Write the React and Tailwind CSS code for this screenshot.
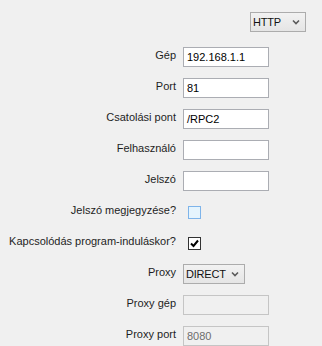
import React from "react"

const font = { fontFamily: "'Liberation Sans', Arial, sans-serif" }

const Chevron = () => (
	<svg width="8" height="6" viewBox="0 0 8 6" className="text-[#5a5a5a] shrink-0">
		<path d="M1 1.5 L4 4.5 L7 1.5" fill="none" stroke="currentColor" strokeWidth="1.6" />
	</svg>
)

const Select = ({ value, className }) => (
	<div className={"flex items-center justify-between h-5 pl-[2px] pr-[5px] border border-[#acacac] bg-gradient-to-b from-[#f2f2f2] to-[#e5e5e5] text-[11px] text-[#111] " + className}>
		<span className="tracking-[-0.2px]">{value}</span>
		<Chevron />
	</div>
)

const TextBox = ({ value, disabled }) => (
	<div className={"flex items-center h-5 w-[86px] px-[3px] border text-[11px] " + (disabled ? "border-[#c5c5c5] bg-[#f0f0f0] text-[#6d6d6d]" : "border-[#abadb3] bg-white text-black")}>
		{value}
	</div>
)

const Check = ({ checked }) => (
	<div className={"mx-[5px] w-[13px] h-[13px] border flex items-center justify-center " + (checked ? "border-[#333] bg-white" : "border-[#7eb4ea] bg-[#e5f4fd]")}>
		{checked && (
			<svg width="9" height="9" viewBox="0 0 9 9">
				<path d="M1 4.5 L3.5 7 L8 1.5" fill="none" stroke="#000" strokeWidth="2" />
			</svg>
		)}
	</div>
)

const rows = [
	{ label: "Gép", el: <TextBox value="192.168.1.1" /> },
	{ label: "Port", el: <TextBox value="81" /> },
	{ label: "Csatolási pont", el: <TextBox value="/RPC2" /> },
	{ label: "Felhasználó", el: <TextBox value="" /> },
	{ label: "Jelszó", el: <TextBox value="" /> },
	{ label: "Jelszó megjegyzése?", el: <Check checked={false} /> },
	{ label: "Kapcsolódás program-induláskor?", el: <Check checked /> },
	{ label: "Proxy", el: <Select value="DIRECT" className="w-[62px]" /> },
	{ label: "Proxy gép", el: <TextBox value="" disabled /> },
	{ label: "Proxy port", el: <TextBox value="8080" disabled /> },
]

const App = () => (
	<div className="w-[322px] h-[346px] bg-[#f0f0f0] text-[11px] text-[#1e1e1e] overflow-hidden" style={font}>
		<div className="flex justify-end pt-3 pr-4">
			<Select value="HTTP" className="w-14" />
		</div>
		<div className="grid grid-cols-[176px_auto] gap-x-[7px] gap-y-[11px] mt-[15px]">
			{rows.map(r => (
				<React.Fragment key={r.label}>
					<div className="h-5 flex items-center justify-end pb-[3px] whitespace-nowrap">{r.label}</div>
					<div className="h-5 flex items-center">{r.el}</div>
				</React.Fragment>
			))}
		</div>
	</div>
)

export default App
